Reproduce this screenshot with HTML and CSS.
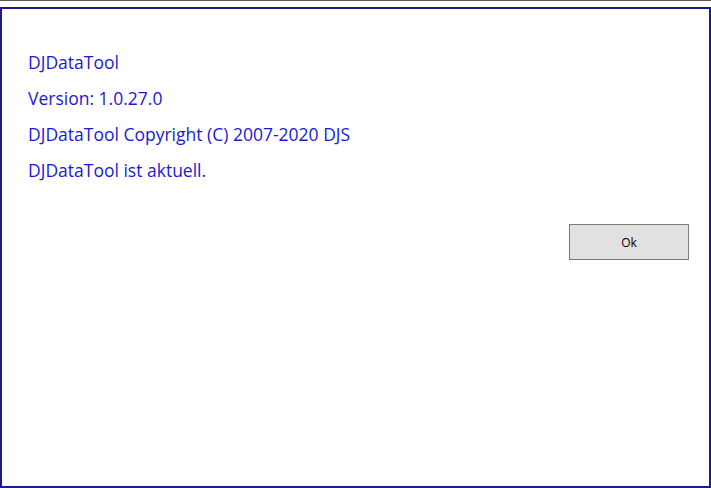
FILE: index.html
```html
<!DOCTYPE html>
<html lang="de">
<head>
    <meta charset="UTF-8">
    <title>Info DJDataTool</title>
    <link rel="stylesheet" href="styles.css">
</head>
<body>
    <div class="topline"></div>
    <div class="dialog">
        <div class="info">
            <p>DJDataTool</p>
            <p>Version: 1.0.27.0</p>
            <p>DJDataTool Copyright (C) 2007-2020 DJS</p>
            <p>DJDataTool ist aktuell.</p>
        </div>
        <div class="actions">
            <button type="button">Ok</button>
        </div>
    </div>
</body>
</html>
```

FILE: styles.css
```css
* {
    box-sizing: border-box;
    margin: 0;
    padding: 0;
}

html, body {
    height: 100%;
}

body {
    background: #fff;
    font-family: "Open Sans", "Noto Sans", sans-serif;
    display: flex;
    flex-direction: column;
}

.topline {
    height: 7px;
    border-top: 1px solid #5a5a5a;
}

.dialog {
    flex: 1;
    border: 2px solid #1c1c8a;
    padding: 35px 20px 0 26px;
}

.info p {
    color: #1a1ad4;
    font-size: 17.5px;
    line-height: 36px;
    height: 36px;
}

.actions {
    display: flex;
    justify-content: flex-end;
    margin-top: 36px;
}

button {
    width: 120px;
    height: 36px;
    background: #e1e1e1;
    border: 1px solid #7a7a7a;
    font-family: "Open Sans", "Noto Sans", sans-serif;
    font-size: 12px;
    color: #000;
}
```
